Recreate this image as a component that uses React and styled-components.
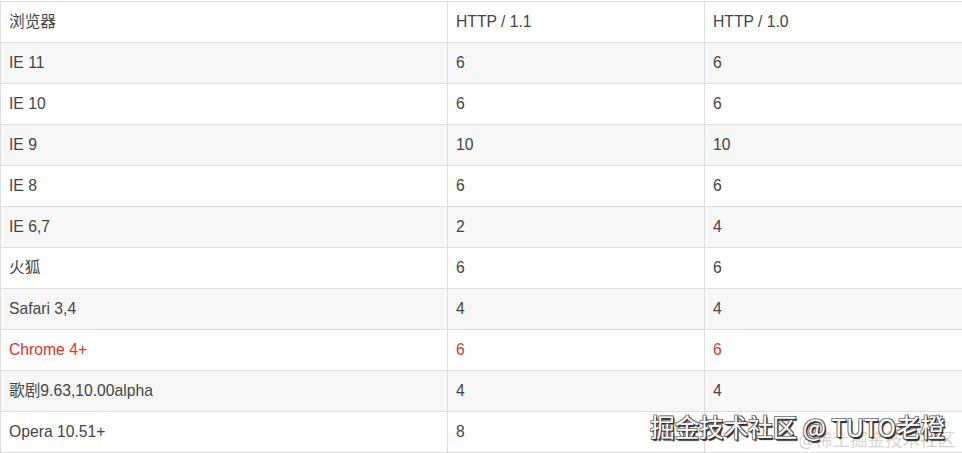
import React from "react";
import styled, { createGlobalStyle } from "styled-components";

const Global = createGlobalStyle`
  html, body { margin: 0; padding: 0; background: #fff; }
  body { font-family: "Liberation Sans", Arial, "Noto Sans CJK SC", sans-serif; }
`;

const Page = styled.div`
  position: relative;
  width: 962px;
  height: 453px;
  padding-top: 1px;
  box-sizing: border-box;
  overflow: hidden;
`;

const Table = styled.table`
  border-collapse: collapse;
  table-layout: fixed;
  width: 962px;
  font-family: "Liberation Sans", Arial, "Noto Sans CJK SC", sans-serif;
  font-size: 15.7px;
  color: #444;
`;

const Row = styled.tr`
  height: 41px;
  background: ${(p) => (p.$striped ? "#f7f7f7" : "#fff")};
  color: ${(p) => (p.$highlight ? "#d9342b" : "inherit")};
`;

const Cell = styled.td`
  border: 1px solid #dddddd;
  padding: 0 8px;
  vertical-align: middle;
  text-align: left;
  font-weight: normal;
  line-height: 20px;
  white-space: nowrap;
`;

const Watermark = styled.div`
  position: absolute;
  right: 16px;
  bottom: 4px;
  width: 320px;
  height: 40px;
  pointer-events: none;
`;

const MainMark = styled.div`
  position: absolute;
  right: 1px;
  top: 3px;
  font-family: "Noto Sans CJK SC", sans-serif;
  font-size: 24.5px;
  line-height: 30px;
  color: #fff;
  white-space: nowrap;
  text-shadow: 1px 1px 0 #333, -1px -1px 0 #888, 1px -1px 0 #666, -1px 1px 0 #666, 1.5px 1.5px 1px #222;
`;

const SubMark = styled.div`
  position: absolute;
  right: -9px;
  top: 19px;
  font-family: "Noto Sans CJK SC", sans-serif;
  font-size: 17.5px;
  line-height: 22px;
  color: rgba(200, 200, 200, 0.8);
  white-space: nowrap;
`;

const rows = [
  ["IE 11", "6", "6"],
  ["IE 10", "6", "6"],
  ["IE 9", "10", "10"],
  ["IE 8", "6", "6"],
  ["IE 6,7", "2", "4"],
  ["火狐", "6", "6"],
  ["Safari 3,4", "4", "4"],
  ["Chrome 4+", "6", "6", true],
  ["歌剧9.63,10.00alpha", "4", "4"],
  ["Opera 10.51+", "8", "8"],
];

export default function App() {
  return (
    <>
      <Global />
      <Page>
        <Table>
          <colgroup>
            <col style={{ width: 447 }} />
            <col style={{ width: 257 }} />
            <col style={{ width: 258 }} />
          </colgroup>
          <thead>
            <Row>
              <Cell as="th">浏览器</Cell>
              <Cell as="th">HTTP / 1.1</Cell>
              <Cell as="th">HTTP / 1.0</Cell>
            </Row>
          </thead>
          <tbody>
            {rows.map(([b, a, c, hl], i) => (
              <Row key={b} $striped={i % 2 === 0} $highlight={hl}>
                <Cell>{b}</Cell>
                <Cell>{a}</Cell>
                <Cell>{c}</Cell>
              </Row>
            ))}
          </tbody>
        </Table>
        <Watermark>
          <SubMark>@稀土掘金技术社区</SubMark>
          <MainMark>掘金技术社区 @ TUTO老橙</MainMark>
        </Watermark>
      </Page>
    </>
  );
}
